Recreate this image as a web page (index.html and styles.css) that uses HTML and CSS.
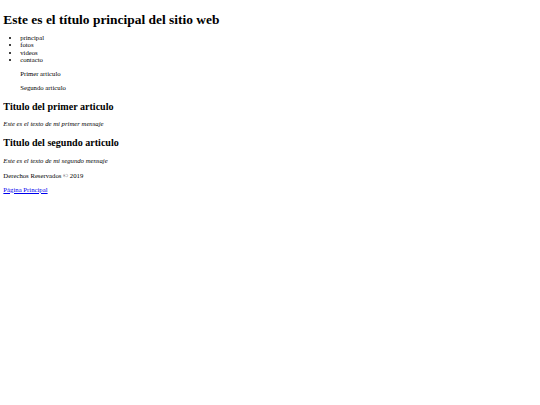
FILE: index.html
```html
<!DOCTYPE html>
<html lang="es">
<head>
<meta charset="utf-8">
<title>Sitio web</title>
<link rel="stylesheet" href="styles.css">
</head>
<body class="page">
<header>
  <h1 class="site-title">Este es el título principal del sitio web</h1>
  <nav>
    <ul class="menu">
      <li>principal</li>
      <li>fotos</li>
      <li>videos</li>
      <li>contacto</li>
    </ul>
  </nav>
</header>
<aside class="side">
  <p class="para">Primer articulo</p>
  <p class="para">Segundo articulo</p>
</aside>
<main>
  <article>
    <h2 class="art-title">Titulo del primer articulo</h2>
    <p class="para art-text">Este es el texto de mi primer mensaje</p>
  </article>
  <article>
    <h2 class="art-title">Titulo del segundo articulo</h2>
    <p class="para art-text">Este es el texto de mi segundo mensaje</p>
  </article>
</main>
<footer class="foot">
  <p class="para">Derechos Reservados © 2019</p>
  <p class="para"><a class="home-link" href="#">Página Principal</a></p>
</footer>
</body>
</html>
```

FILE: styles.css
```css
.page {
  margin: 3.36px;
  font-family: "Liberation Serif", "Times New Roman", serif;
  font-size: 6.72px;
  color: #000;
  background: #fff;
}
.site-title {
  font-size: 13.44px;
  margin: 9px 0 5.7px;
}
.menu {
  margin: 0 0 6.72px;
  padding-left: 16.8px;
  line-height: 7.4px;
}
.side {
  margin: 6.72px 0 6.72px 16.8px;
}
.para {
  margin: 6.72px 0;
}
.art-title {
  font-size: 10.08px;
  margin: 10px 0 8.37px;
}
.art-text {
  font-style: italic;
}
.foot {
  margin-top: 8.1px;
}
.home-link {
  color: #0000ee;
}
```
